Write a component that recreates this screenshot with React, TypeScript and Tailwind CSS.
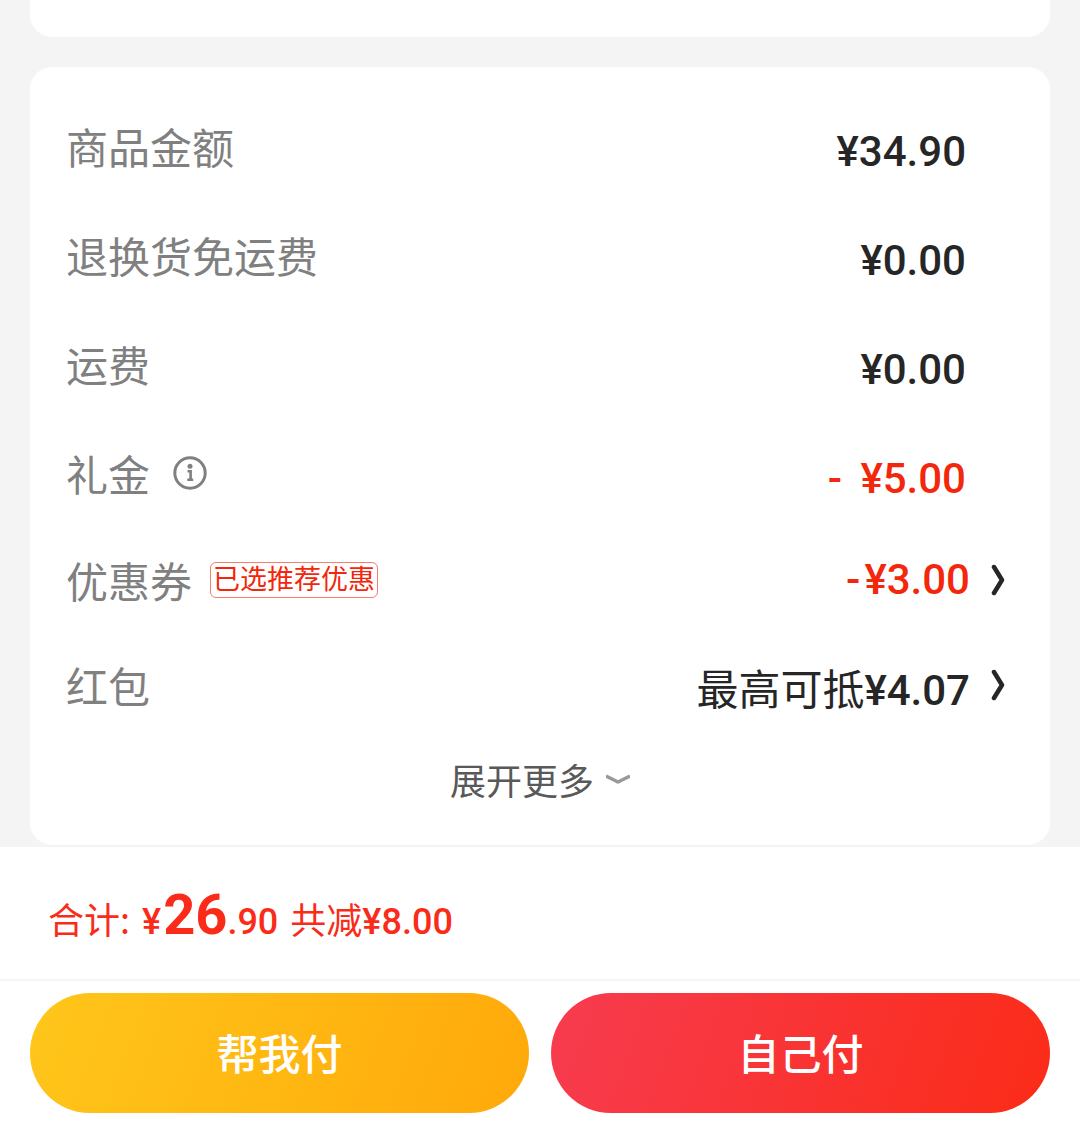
import type { ReactNode } from "react";

const zh = "font-['Noto_Sans_CJK_SC',sans-serif]";
const num = "font-[Roboto,'Noto_Sans_CJK_SC',sans-serif]";

function Label({ children }: { children: ReactNode }) {
  return <dt className="flex items-center text-[42px] leading-[60px] text-[#808080]">{children}</dt>;
}

function Row({ label, value, red }: { label: ReactNode; value: ReactNode; red?: boolean }) {
  return (
    <div className="flex h-[109px] items-center justify-between pr-12">
      <Label>{label}</Label>
      <dd
        className={`font-[Roboto,'Noto_Sans_CJK_SC',sans-serif] pt-3 text-[42px] leading-[60px] font-medium ${red ? "text-[#f2270c]" : "text-[#262626]"}`}
      >
        {value}
      </dd>
    </div>
  );
}

function ChevronRight() {
  return (
    <svg className="h-8 w-4 shrink-0" viewBox="0 0 16 32" fill="none" stroke="#262626" aria-hidden="true">
      <path d="M4 3L12 16L4 29" strokeWidth="4.500" strokeLinecap="round" strokeLinejoin="round" />
    </svg>
  );
}

function InfoIcon() {
  return (
    <svg className="h-9 w-9" viewBox="0 0 36 36" fill="none" stroke="#808080" aria-hidden="true">
      <circle cx="18" cy="18" r="15.200" strokeWidth="3" />
      <circle cx="18" cy="11.200" r="2.500" fill="#808080" stroke="none" />
      <path d="M15.500 16.300H18.600V24.500M15.300 24.800H21.200" strokeWidth="2.600" />
    </svg>
  );
}

export default function App() {
  return (
    <main className={`${zh} flex min-h-screen flex-col bg-[#f4f4f4]`}>
      <div className="mx-[30px] h-[37px] rounded-b-[22px] bg-white" />

      <section className="mx-[30px] mt-[30px] rounded-[22px] bg-white px-9 pt-6 pb-6">
        <dl>
          <Row label="商品金额" value="¥34.90" />
          <Row label="退换货免运费" value="¥0.00" />
          <Row label="运费" value="¥0.00" />
          <Row
            label={
              <>
                礼金
                <button type="button" aria-label="礼金说明" className="ml-[22px]">
                  <InfoIcon />
                </button>
              </>
            }
            value={
              <>
                <span className="mr-2">-</span> ¥5.00
              </>
            }
            red
          />
          <div className="flex h-[105px] items-center justify-between pr-2">
            <Label>
              优惠券
              <span className="ml-[18px] flex h-9 items-center rounded-md border border-[#f2270c]/60 px-0.5 pb-1 text-[27px] leading-[34px] text-[#f2270c]">
                已选推荐优惠
              </span>
            </Label>
            <dd>
              <button type="button" className="flex items-center gap-5 text-[42px] leading-[60px] text-[#f2270c]">
                <span className={`${num} font-medium`}>
                  <span className="mr-1">-</span>¥3.00
                </span>
                <ChevronRight />
              </button>
            </dd>
          </div>
          <div className="flex h-[105px] items-center justify-between pr-2">
            <Label>红包</Label>
            <dd>
              <button type="button" className="flex items-center gap-5 text-[42px] leading-[60px] text-[#262626]">
                <span className="pt-2">
                  最高可抵<span className={`${num} font-medium`}>¥4.07</span>
                </span>
                <ChevronRight />
              </button>
            </dd>
          </div>
        </dl>
        <button
          type="button"
          className="mx-auto flex h-[84px] items-center gap-3 text-[36px] leading-[52px] text-[#595959]"
        >
          展开更多
          <svg className="h-4 w-6" viewBox="0 0 24 16" fill="none" stroke="#999" aria-hidden="true">
            <path d="M0 5L10.500 10.300Q12 11 13.500 10.300L24 5" strokeWidth="3.500" />
          </svg>
        </button>
      </section>

      <footer className="mt-0.5 grow bg-white">
        <div className="flex h-[134px] items-baseline border-b-2 border-[#f5f5f5] pt-[26px] pl-12 text-[36px] leading-[84px] text-[#fa2c19]">
          <span>合计:</span>
          <span className={`${num} ml-3 font-medium`}>
            ¥<span className="ml-0.5 text-[56px] font-bold">26</span>.90
          </span>
          <span className="ml-3">
            共减<span className={`${num} font-medium`}>¥8.00</span>
          </span>
        </div>
        <div className="flex gap-[22px] px-[30px] py-3 text-[42px] leading-[60px] font-medium text-white">
          <button type="button" className="h-[120px] flex-1 rounded-full bg-linear-[110deg,#ffc61a,#ffa90a] pb-0.5">
            帮我付
          </button>
          <button type="button" className="h-[120px] flex-1 rounded-full bg-linear-[110deg,#f73c50,#fb2b17] pb-0.5">
            自己付
          </button>
        </div>
      </footer>
    </main>
  );
}
